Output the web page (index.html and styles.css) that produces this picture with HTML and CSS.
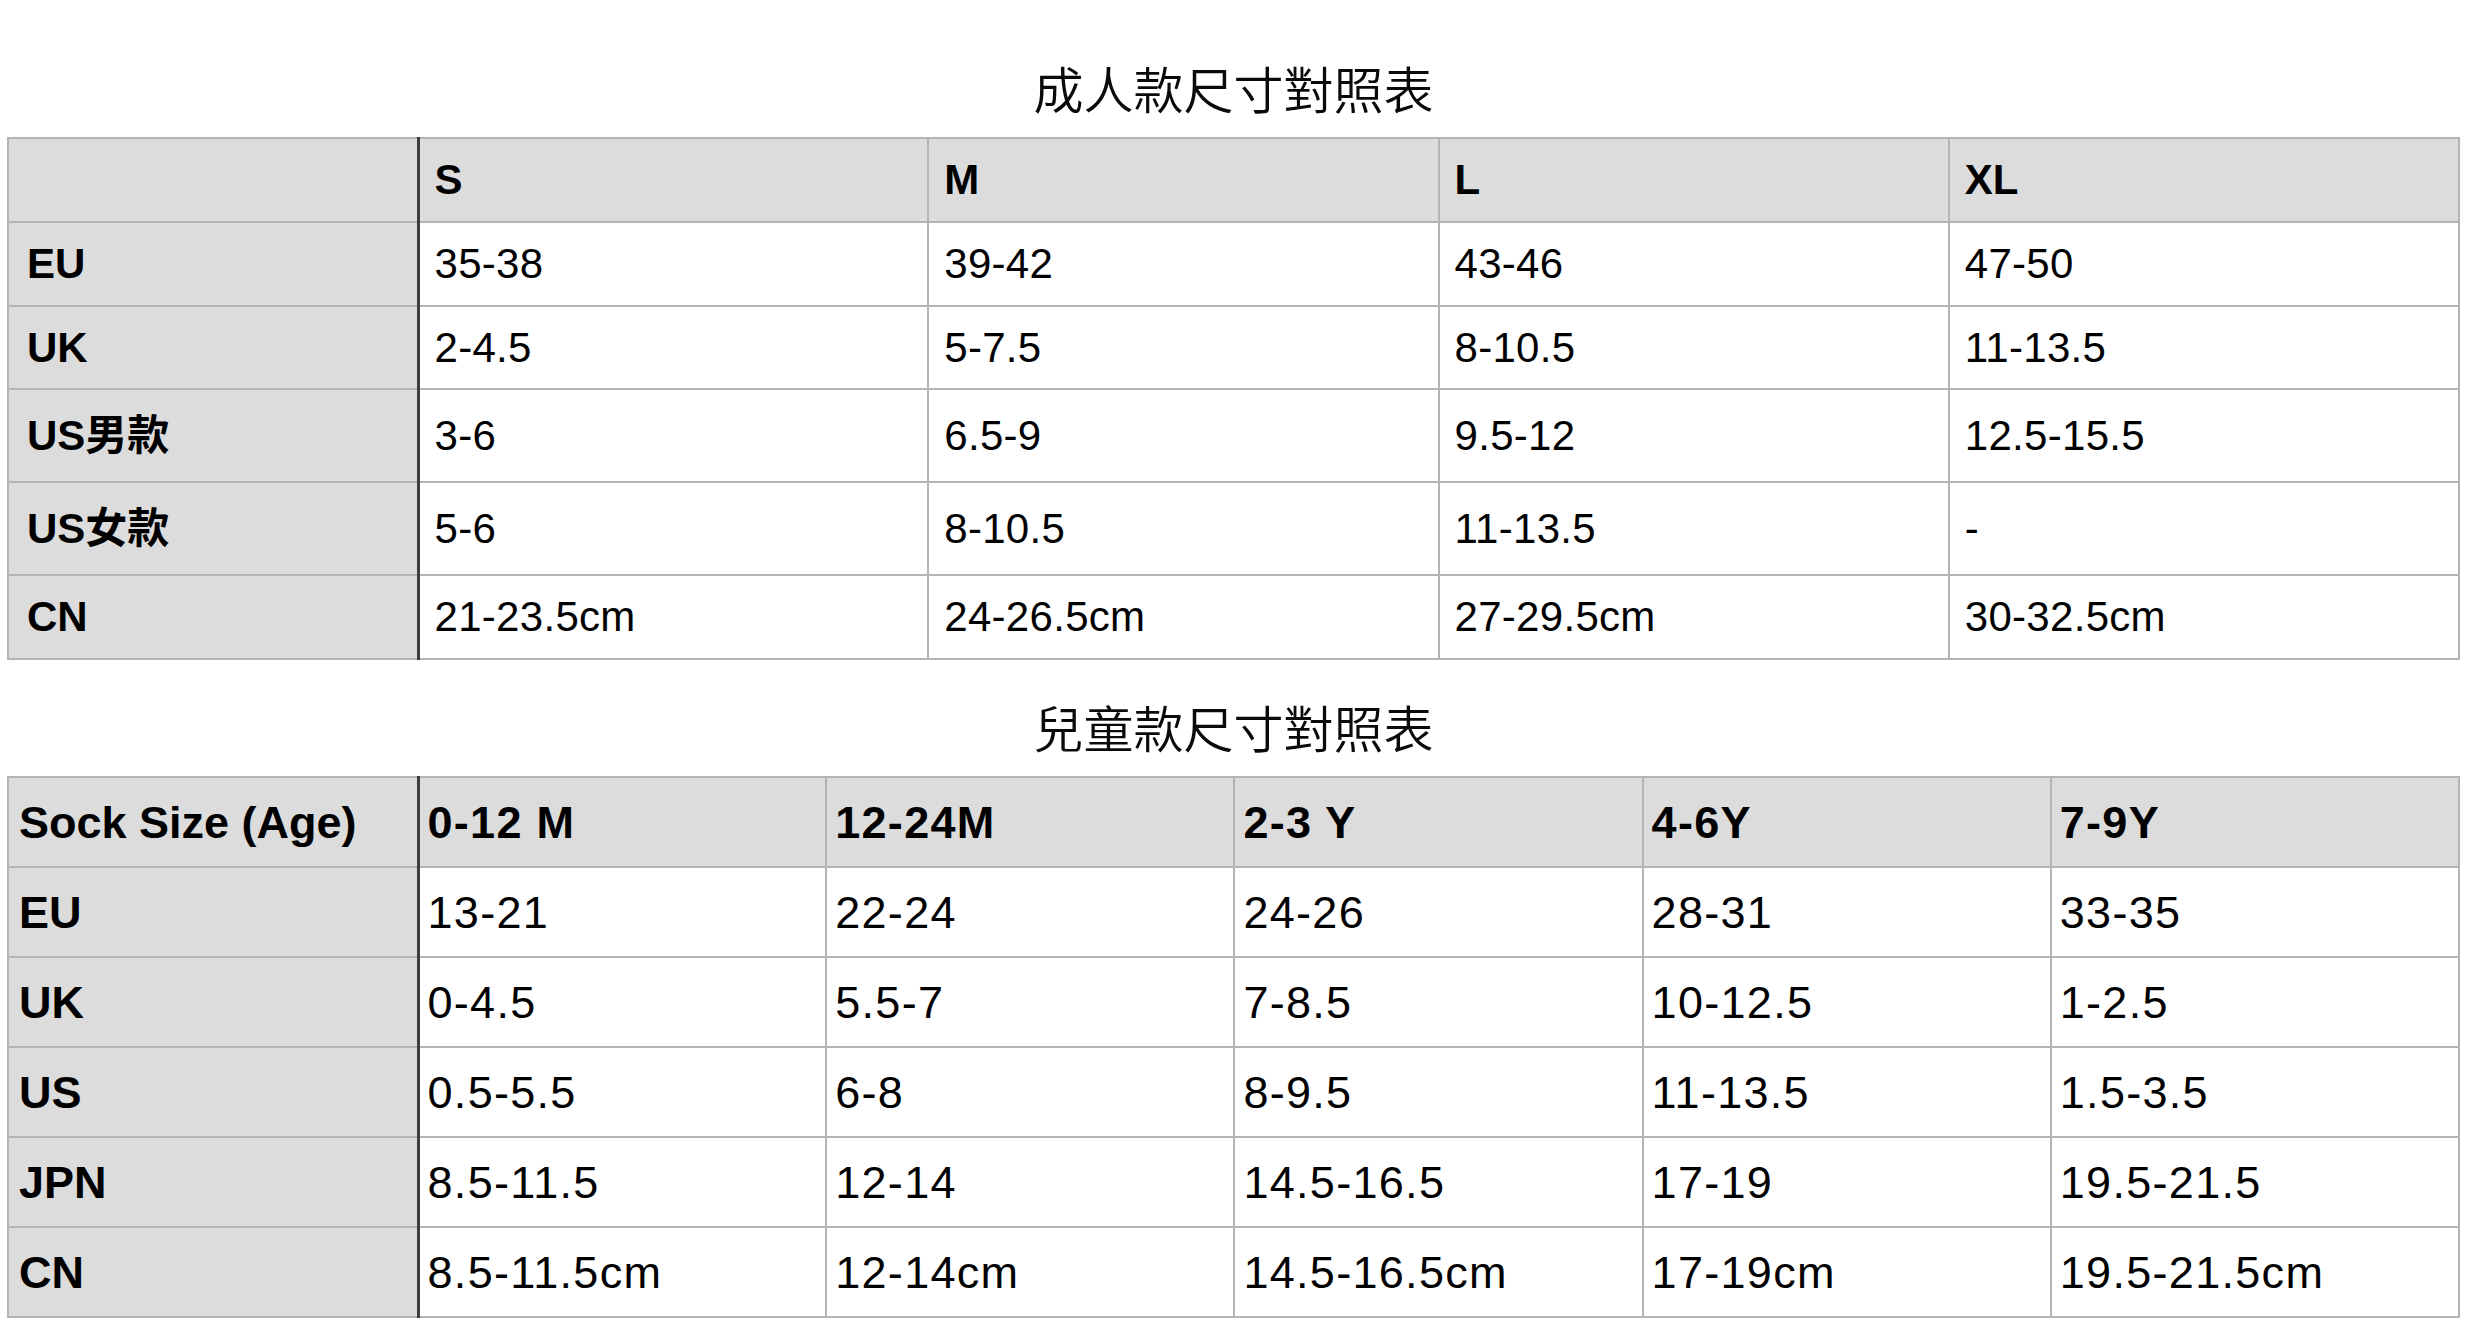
FILE: index.html
```html
<!DOCTYPE html>
<html lang="zh-Hant">
<head>
<meta charset="utf-8">
<title>尺寸對照表</title>
<link rel="stylesheet" href="styles.css">
</head>
<body>
<main class="page">
  <section class="chart chart-adult">
    <h2 class="chart-title">成人款尺寸對照表</h2>
    <table class="size-table">
      <colgroup><col class="label-col"><col><col><col><col></colgroup>
      <thead>
        <tr class="row"><th class="label"></th><th>S</th><th>M</th><th>L</th><th>XL</th></tr>
      </thead>
      <tbody>
        <tr class="row"><th class="label">EU</th><td>35-38</td><td>39-42</td><td>43-46</td><td>47-50</td></tr>
        <tr class="row row-uk"><th class="label">UK</th><td>2-4.5</td><td>5-7.5</td><td>8-10.5</td><td>11-13.5</td></tr>
        <tr class="row row-tall"><th class="label">US男款</th><td>3-6</td><td>6.5-9</td><td>9.5-12</td><td>12.5-15.5</td></tr>
        <tr class="row row-tall"><th class="label">US女款</th><td>5-6</td><td>8-10.5</td><td>11-13.5</td><td>-</td></tr>
        <tr class="row"><th class="label">CN</th><td>21-23.5cm</td><td>24-26.5cm</td><td>27-29.5cm</td><td>30-32.5cm</td></tr>
      </tbody>
    </table>
  </section>

  <section class="chart chart-kids">
    <h2 class="chart-title">兒童款尺寸對照表</h2>
    <table class="size-table">
      <colgroup><col class="label-col"><col><col><col><col><col></colgroup>
      <thead>
        <tr class="row"><th class="label">Sock Size (Age)</th><th>0-12 M</th><th>12-24M</th><th>2-3 Y</th><th>4-6Y</th><th>7-9Y</th></tr>
      </thead>
      <tbody>
        <tr class="row"><th class="label">EU</th><td>13-21</td><td>22-24</td><td>24-26</td><td>28-31</td><td>33-35</td></tr>
        <tr class="row"><th class="label">UK</th><td>0-4.5</td><td>5.5-7</td><td>7-8.5</td><td>10-12.5</td><td>1-2.5</td></tr>
        <tr class="row"><th class="label">US</th><td>0.5-5.5</td><td>6-8</td><td>8-9.5</td><td>11-13.5</td><td>1.5-3.5</td></tr>
        <tr class="row"><th class="label">JPN</th><td>8.5-11.5</td><td>12-14</td><td>14.5-16.5</td><td>17-19</td><td>19.5-21.5</td></tr>
        <tr class="row"><th class="label">CN</th><td>8.5-11.5cm</td><td>12-14cm</td><td>14.5-16.5cm</td><td>17-19cm</td><td>19.5-21.5cm</td></tr>
      </tbody>
    </table>
  </section>
</main>
</body>
</html>
```

FILE: styles.css
```css
html, body {
  margin: 0;
  padding: 0;
  background: #ffffff;
}

body {
  font-family: "Liberation Sans", Arial, "Noto Sans CJK TC", sans-serif;
  color: #000000;
}

.page {
  width: 2453px;
  margin: 0 0 0 7px;
  padding-top: 57px;
}

.chart-title {
  margin: 0 0 20px 0;
  height: 60px;
  line-height: 60px;
  font-family: "Noto Sans CJK TC", sans-serif;
  font-weight: 350;
  font-size: 50px;
  text-align: center;
  color: #0a0a0a;
}

.chart-kids {
  margin-top: 36px;
}

.size-table {
  width: 2453px;
  table-layout: fixed;
  border-collapse: collapse;
  border: 2px solid #b4b4b4;
}

.label-col {
  width: 410px;
}

.size-table th,
.size-table td {
  border: 2px solid #b4b4b4;
  vertical-align: middle;
  text-align: left;
  padding: 0 0 0 15px;
  line-height: 1;
  white-space: nowrap;
}

.size-table th {
  font-weight: 700;
}

.size-table td {
  font-weight: 400;
  background: #ffffff;
}

.size-table thead th {
  background: #dcdcdc;
}

.size-table th.label {
  background: #dcdcdc;
  border-right: 3px solid #3d3d3d;
  padding-left: 18px;
}

/* adult chart */
.chart-adult .size-table {
  font-size: 42px;
}

.chart-adult .size-table td {
  letter-spacing: 0.3px;
}

.chart-adult .row {
  height: 84px;
}

.chart-adult .row-uk {
  height: 83px;
}

.chart-adult .row-tall {
  height: 93px;
}

/* kids chart */
.chart-kids .size-table {
  font-size: 45px;
}

.chart-kids .row {
  height: 90px;
}

.chart-kids .size-table th,
.chart-kids .size-table td {
  padding-left: 8px;
  letter-spacing: 1.3px;
}

.chart-kids .size-table th.label {
  padding-left: 10px;
  letter-spacing: 0;
}
```
